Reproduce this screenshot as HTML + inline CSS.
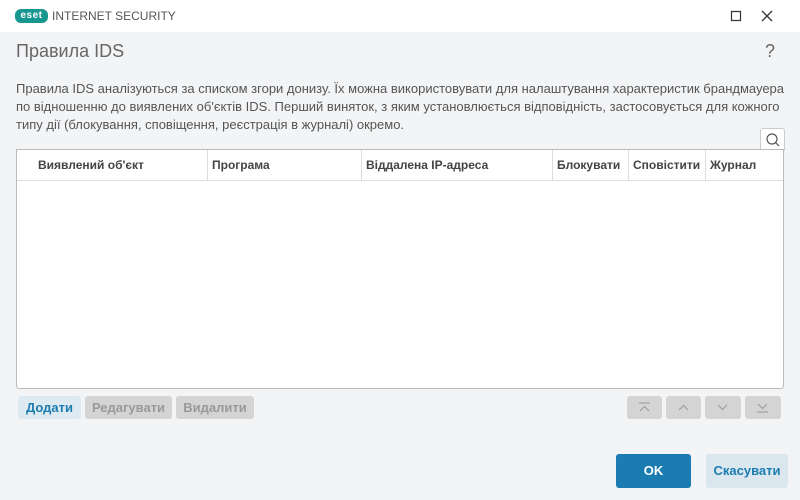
<html><head><style>
body{margin:0;width:800px;height:500px;background:#f3f4f6;font-family:"Liberation Sans",sans-serif;position:relative;overflow:hidden;color:#444}
.a{position:absolute}
.tb{left:0;top:0;width:800px;height:32px;background:#fff}
.btn{position:absolute;height:23px;border-radius:3px;font-size:13px;font-weight:bold;text-align:center;line-height:23px}
.th{position:absolute;top:0;height:30px;line-height:30px;font-size:12px;font-weight:bold;color:#444;border-right:1px solid #ddd;box-sizing:border-box;padding-left:4px}
</style></head><body>
<div class="a tb"></div>
<div class="a" style="left:15px;top:9px;width:31px;height:12px;border:1px solid #17978f;background:#17978f;border-radius:6px;color:#fff;font-size:10px;font-weight:bold;line-height:12px;text-align:center;letter-spacing:0.5px">eset</div>
<div class="a" style="left:52px;top:9px;font-size:12px;color:#555">INTERNET SECURITY</div>
<svg class="a" style="left:724px;top:5px" width="60" height="22"><rect x="7.5" y="6.5" width="9" height="9" fill="none" stroke="#333" stroke-width="1.2"/><path d="M38 6l10 10M48 6l-10 10" stroke="#333" stroke-width="1.3"/></svg>
<div class="a" style="left:16px;top:41px;font-size:18px;color:#666">Правила IDS</div>
<div class="a" style="left:765px;top:41px;font-size:18px;color:#666">?</div>
<div class="a" style="left:16px;top:80px;width:770px;font-size:13px;line-height:18px;color:#555">Правила IDS аналізуються за списком згори донизу. Їх можна використовувати для налаштування характеристик брандмауера по відношенню до виявлених об'єктів IDS. Перший виняток, з яким установлюється відповідність, застосовується для кожного типу дії (блокування, сповіщення, реєстрація в журналі) окремо.</div>
<div class="a" style="left:760px;top:128px;width:23px;height:22px;background:#fff;border:1px solid #ccc;border-bottom:none;border-radius:3px 3px 0 0"><svg width="22" height="22"><circle cx="11" cy="10" r="5" fill="none" stroke="#555" stroke-width="1.2"/><line x1="14.5" y1="13.5" x2="18" y2="17" stroke="#555" stroke-width="1.2"/></svg></div>
<div class="a" style="left:16px;top:149px;width:766px;height:238px;background:#fff;border:1px solid #bbb;border-radius:0 0 3px 3px">
<div class="a" style="left:0;top:30px;width:766px;border-top:1px solid #ddd"></div>
<div class="th" style="left:0;width:191px;padding-left:21px">Виявлений об'єкт</div>
<div class="th" style="left:191px;width:154px">Програма</div>
<div class="th" style="left:345px;width:191px">Віддалена IP-адреса</div>
<div class="th" style="left:536px;width:76px">Блокувати</div>
<div class="th" style="left:612px;width:77px">Сповістити</div>
<div class="th" style="left:689px;width:77px;border-right:none">Журнал</div>
</div>
<div class="btn" style="left:18px;top:396px;width:63px;background:#deeaf1;color:#1c7cb0">Додати</div>
<div class="btn" style="left:85px;top:396px;width:87px;background:#d4d4d4;color:#999">Редагувати</div>
<div class="btn" style="left:176px;top:396px;width:78px;background:#d4d4d4;color:#999">Видалити</div>
<div class="btn" style="left:627px;top:396px;width:35px;background:#d4d4d4"><svg width="35" height="23"><path d="M12 7h11M13 15l4.5-4.5 4.5 4.5" fill="none" stroke="#999"/></svg></div>
<div class="btn" style="left:666px;top:396px;width:35px;background:#d4d4d4"><svg width="35" height="23"><path d="M13 14l4.5-4.5 4.5 4.5" fill="none" stroke="#999"/></svg></div>
<div class="btn" style="left:705px;top:396px;width:36px;background:#d4d4d4"><svg width="36" height="23"><path d="M13 9l4.5 4.5 4.5-4.5" fill="none" stroke="#999"/></svg></div>
<div class="btn" style="left:745px;top:396px;width:36px;background:#d4d4d4"><svg width="36" height="23"><path d="M13 8l4.5 4.5 4.5-4.5M12 16h11" fill="none" stroke="#999"/></svg></div>
<div class="btn" style="left:616px;top:454px;width:75px;height:34px;line-height:34px;background:#1a7cb0;color:#fff">OK</div>
<div class="btn" style="left:706px;top:454px;width:82px;height:34px;line-height:34px;background:#dbe7ee;color:#1c7cb0">Скасувати</div>
</body></html>
